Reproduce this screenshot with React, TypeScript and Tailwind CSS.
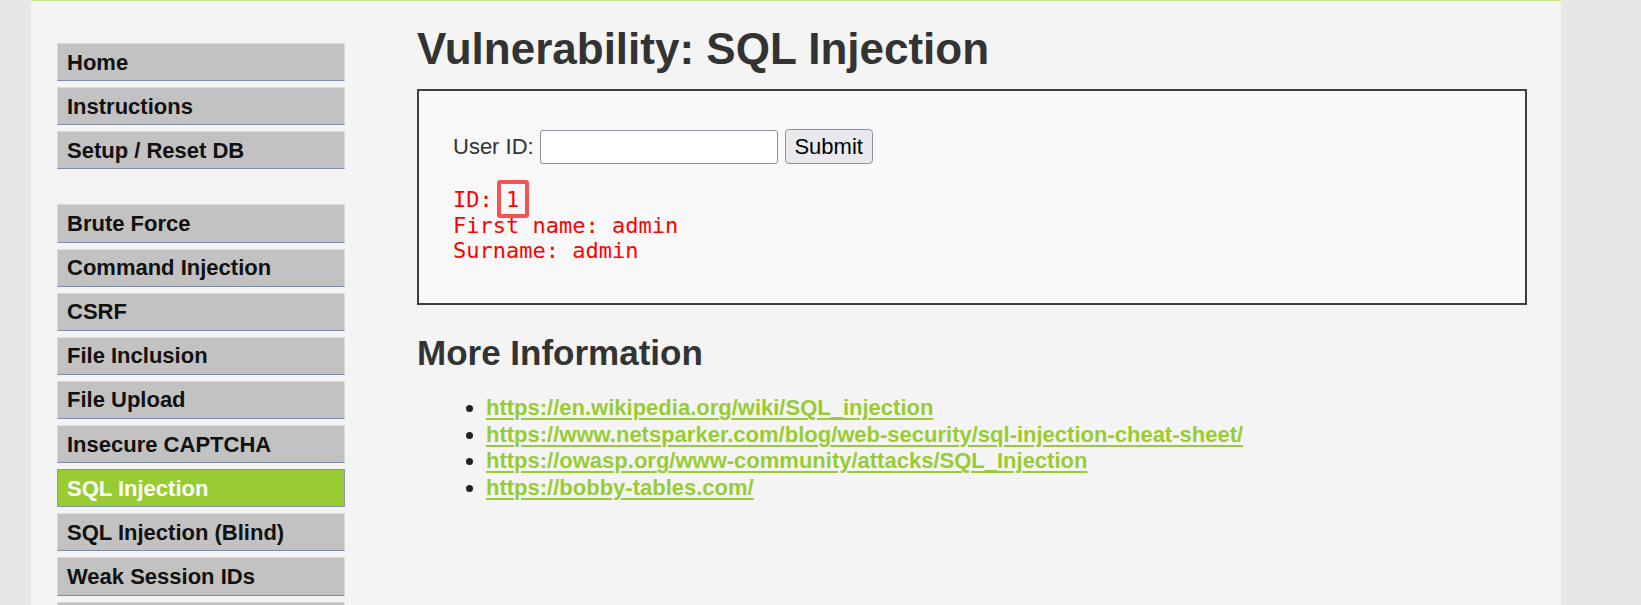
import React from 'react';

type NavItem = { label: string; active?: boolean };

const topNav: NavItem[] = [{ label: 'Home' }, { label: 'Instructions' }, { label: 'Setup / Reset DB' }];

const vulnNav: NavItem[] = [
  { label: 'Brute Force' },
  { label: 'Command Injection' },
  { label: 'CSRF' },
  { label: 'File Inclusion' },
  { label: 'File Upload' },
  { label: 'Insecure CAPTCHA' },
  { label: 'SQL Injection', active: true },
  { label: 'SQL Injection (Blind)' },
  { label: 'Weak Session IDs' },
  { label: 'XSS (DOM)' },
];

const links = [
  'https://en.wikipedia.org/wiki/SQL_injection',
  'https://www.netsparker.com/blog/web-security/sql-injection-cheat-sheet/',
  'https://owasp.org/www-community/attacks/SQL_Injection',
  'https://bobby-tables.com/',
];

function MenuButton({ item }: { item: NavItem }) {
  return (
    <a
      href="#"
      className={
        item.active
          ? 'flex h-[38.125px] shrink-0 items-center border border-[#8796b4] bg-[#99cc33] pl-[9px] text-[22px] font-bold text-white'
          : 'flex h-[38.125px] shrink-0 items-center border border-[#d9d9d9] border-b-[#7f8ca3] bg-[#c2c2c2] pl-[9px] text-[22px] font-bold text-[#111]'
      }
    >
      {item.label}
    </a>
  );
}

export default function App() {
  return (
    <div className="flex h-[605px] overflow-hidden bg-[#e7e7e7] font-['Liberation_Sans',Arial,sans-serif]">
      <div className="ml-[31px] flex w-[1530px] shrink-0 border-t border-[#c5df8c] bg-[#f4f4f4]">
        {/* side menu */}
        <nav className="ml-[26px] mt-[42px] flex w-[288px] shrink-0 flex-col gap-[6px]">
          {topNav.map((item) => (
            <MenuButton key={item.label} item={item} />
          ))}
          <div className="h-[23px] shrink-0" />
          {vulnNav.map((item) => (
            <MenuButton key={item.label} item={item} />
          ))}
        </nav>

        {/* body */}
        <main className="ml-[72px] flex flex-col pt-[23px] text-[#333]">
          <h1 className="text-[44px] font-bold leading-[50px]">Vulnerability: SQL Injection</h1>

          <div className="mt-[15px] h-[216px] w-[1110px] border-2 border-[#3d3d3d] bg-[#f7f8f7] pl-[34px] pt-[38px]">
            <form className="flex items-center text-[22px]" onSubmit={(e) => e.preventDefault()}>
              <label className="mr-[6px]">User ID:</label>
              <input
                type="text"
                className="h-[34px] w-[238px] rounded-[3px] border border-[#8f8f9d] bg-white"
              />
              <button
                type="submit"
                className="ml-[7px] h-[35px] w-[88px] rounded-[4px] border border-[#8f8f9d] bg-[#e9e9ed] text-[22px] leading-none text-black"
              >
                Submit
              </button>
            </form>
            <pre className="mt-[23px] font-['DejaVu_Sans_Mono','Liberation_Mono',monospace] text-[22px] leading-[25.6px] text-[#ff0000]">
              {'ID: '}
              <span className="relative">
                1
                <span className="absolute -left-[9px] -right-[10px] -top-[7px] -bottom-[6px] rounded-[3px] border-[4px] border-[#f25454]" />
              </span>
              {'\nFirst name: admin\nSurname: admin'}
            </pre>
          </div>

          <h2 className="mt-[28px] text-[35px] font-bold leading-[40px]">More Information</h2>
          <ul className="mt-[22px] list-disc pl-[69px] text-[22px] leading-[26.6px] marker:text-[#222]">
            {links.map((href) => (
              <li key={href}>
                <a
                  href={href}
                  className="font-bold text-[#99cc33] underline decoration-[#99cc33] decoration-2 underline-offset-[3px]"
                >
                  {href}
                </a>
              </li>
            ))}
          </ul>
        </main>
      </div>
    </div>
  );
}
